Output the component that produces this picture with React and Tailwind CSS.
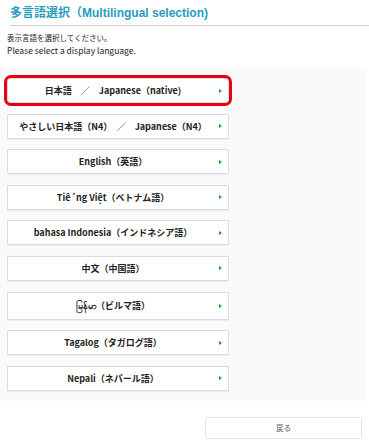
import React from 'react';

const languages = [
    { label: '日本語　／　Japanese（native)', selected: true },
    { label: 'やさしい日本語（N4）　／　Japanese（N4）' },
    { label: 'English（英語）' },
    { label: 'Tiê´ng Việt（ベトナム語）' },
    { label: 'bahasa Indonesia（インドネシア語）' },
    { label: '中文（中国語）' },
    { label: 'မြန်မာ（ビルマ語）', tall: true },
    { label: 'Tagalog（タガログ語）' },
    { label: 'Nepali（ネパール語）' },
];

const font = { fontFamily: '"Noto Sans CJK JP", "DejaVu Sans", sans-serif' };
const titleFont = { fontFamily: '"Liberation Sans", "Noto Sans CJK JP", sans-serif' };

const LangButton = ({ label, selected, tall }) => (
    <button
        type="button"
        className={`relative flex items-center justify-center w-[222px] bg-white border border-[#dcdcdc] shadow-[0_1px_1px_rgba(0,0,0,0.06)] text-[9px] font-bold text-[#222] ${
            tall ? 'h-[28px]' : 'h-[25px]'
        } ${selected ? 'outline-[3px] outline-solid outline-[#e60012] rounded-[4px]' : 'rounded-[1px]'}`}
    >
        <span className="whitespace-pre pr-[10px] leading-none">{label}</span>
        <span className="absolute right-[6px] top-1/2 -translate-y-1/2 w-0 h-0 border-y-[2.5px] border-y-transparent border-l-[3px] border-l-[#1aa51a]" />
    </button>
);

const App = () => {
    return (
        <div className="w-[369px] h-[446px] bg-white overflow-hidden" style={font}>
            <div className="pt-[5px] pl-[10px]">
                <h1 className="text-[12px] font-bold text-[#2a9cc0] leading-[16px]" style={titleFont}>
                    多言語選択（Multilingual selection)
                </h1>
                <div className="mt-[4px] h-px bg-[#cfcfcf]" />
            </div>
            <div className="pl-[7px] pt-[6px] leading-[12px] text-[#222]">
                <p className="text-[7.5px]">表示言語を選択してください。</p>
                <p className="text-[8.5px]">Please select a display language.</p>
            </div>
            <div className="mt-[12px] w-[367px] bg-[#fafafa] pl-[7px] py-[10px] flex flex-col gap-[10.6px]">
                {languages.map((lang) => (
                    <LangButton key={lang.label} {...lang} />
                ))}
            </div>
            <div className="flex justify-end pr-[7px] mt-[16px]">
                <button
                    type="button"
                    className="w-[157px] h-[22px] bg-white border border-[#e3e3e3] rounded-[3px] text-[7.5px] text-[#555]"
                >
                    戻る
                </button>
            </div>
        </div>
    );
};

export default App;
